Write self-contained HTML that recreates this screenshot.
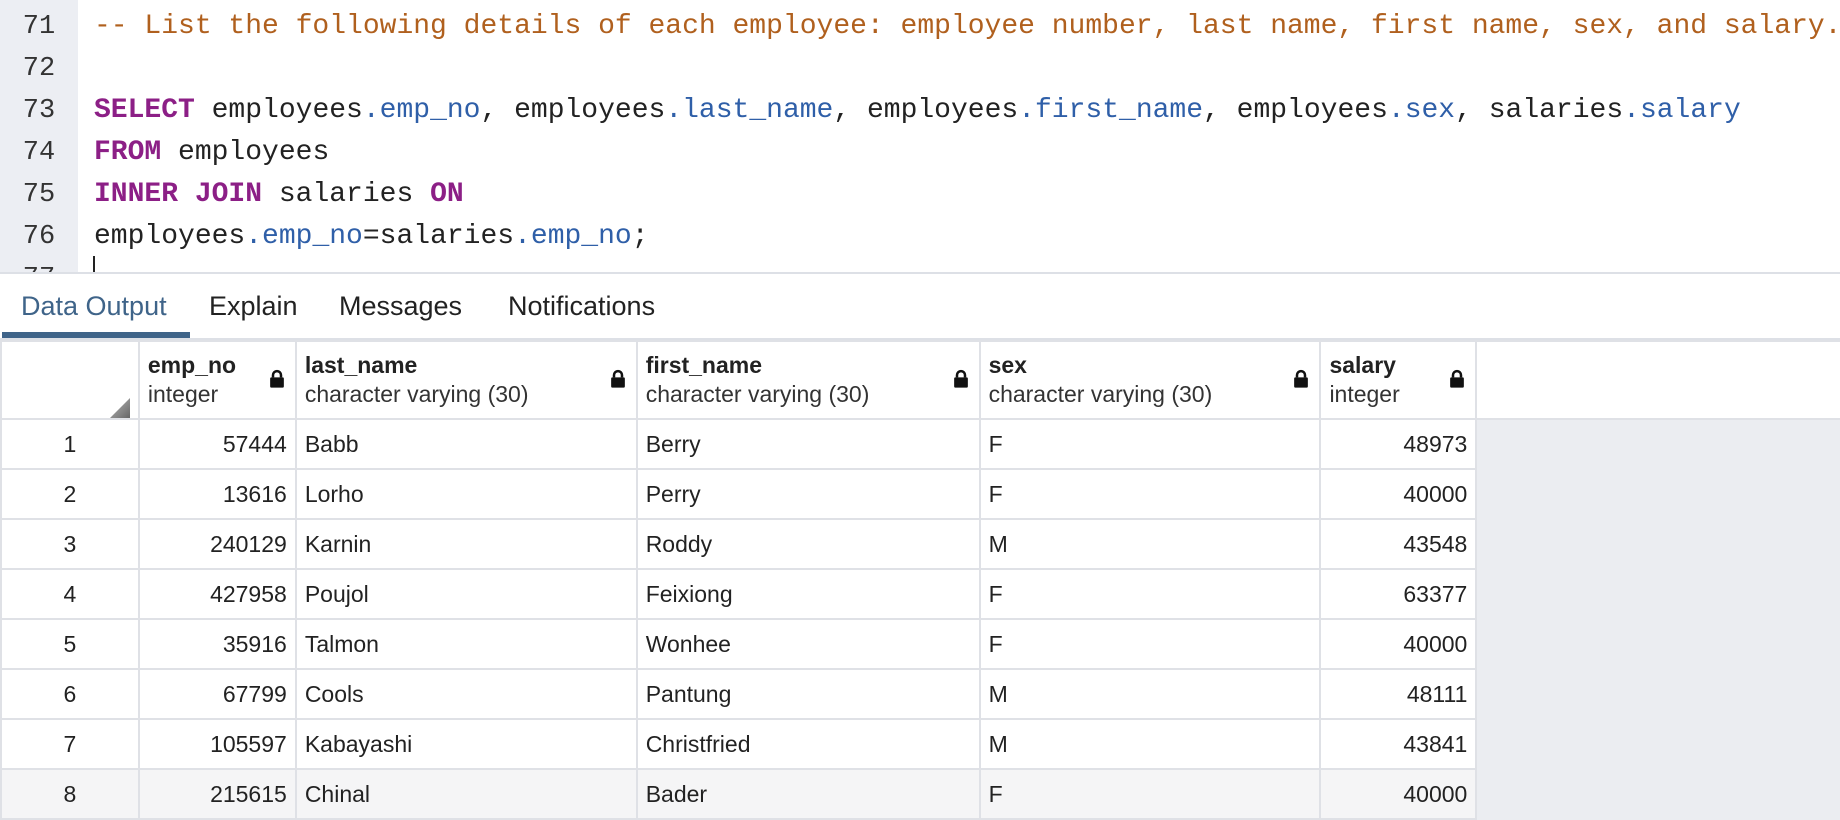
<!DOCTYPE html>
<html><head><meta charset="utf-8"><style>
*{margin:0;padding:0;box-sizing:border-box}
body{width:1840px;height:820px;overflow:hidden;background:#fff;font-family:"Liberation Sans",sans-serif;color:#222;position:relative}
#ed{position:absolute;left:0;top:0;width:1840px;height:274px;overflow:hidden;border-bottom:2px solid #dde0e6}
#gut{position:absolute;left:0;top:0;width:78px;height:274px;background:#eceef3}
.ln{position:absolute;left:0;width:78px;text-align:center;font-family:"Liberation Mono",monospace;font-size:27px;color:#333;line-height:42px}
.cl{position:absolute;left:94px;font-family:"Liberation Mono",monospace;font-size:28px;letter-spacing:0;line-height:42px;white-space:pre;color:#222}
.c{color:#b0601e}.k{color:#8c1f86;font-weight:bold}.p{color:#2f5fa8}
.tab{position:absolute;top:290px;font-size:27px;color:#222;line-height:32px}
#ul{position:absolute;left:2px;top:332px;width:188px;height:6px;background:#3f6489}
#hdr{position:absolute;left:0;top:338px;width:1840px;height:2px;background:#dde0e6}
#right{position:absolute;left:1476px;top:418px;width:364px;height:402px;background:#ebedf1}
table{position:absolute;left:0;top:340px;border-collapse:collapse;font-size:23px}
td,th{border:2px solid #dfe1e6;height:50px;padding:0 8px;white-space:nowrap}
th{height:78px;text-align:left;font-weight:normal;vertical-align:middle;position:relative}
th b{display:block;font-size:23px;line-height:28px}
th span{display:block;font-size:23px;line-height:30px;color:#333}
.lk{position:absolute;right:10px;top:27px;width:16px;height:19px}
.n{text-align:right}.i{text-align:center}
tr.last td{background:#f5f5f6}
</style></head><body>
<div id="ed"><div id="gut"></div>
<div class="ln" style="top:6px">71</div><div class="ln" style="top:48px">72</div><div class="ln" style="top:90px">73</div><div class="ln" style="top:132px">74</div><div class="ln" style="top:174px">75</div><div class="ln" style="top:216px">76</div><div class="ln" style="top:258px">77</div>
<div class="cl c" style="top:6px">-- List the following details of each employee: employee number, last name, first name, sex, and salary.</div>
<div class="cl" style="top:90px"><span class="k">SELECT</span> employees<span class="p">.emp_no</span>, employees<span class="p">.last_name</span>, employees<span class="p">.first_name</span>, employees<span class="p">.sex</span>, salaries<span class="p">.salary</span></div>
<div class="cl" style="top:132px"><span class="k">FROM</span> employees</div>
<div class="cl" style="top:174px"><span class="k">INNER JOIN</span> salaries <span class="k">ON</span></div>
<div class="cl" style="top:216px">employees<span class="p">.emp_no</span>=salaries<span class="p">.emp_no</span>;</div>
<div style="position:absolute;left:93px;top:256px;width:2px;height:20px;background:#222"></div>
</div>
<div class="tab" style="left:21px;color:#3f6489">Data Output</div>
<div class="tab" style="left:209px">Explain</div>
<div class="tab" style="left:339px">Messages</div>
<div class="tab" style="left:508px">Notifications</div>
<div id="hdr"></div><div id="ul"></div>
<div id="right"></div>
<table>
<tr><th style="width:138px"><svg style="position:absolute;left:108px;top:56px" width="20" height="20"><defs><linearGradient id="g" x1="0" y1="0" x2="1" y2="1"><stop offset="0" stop-color="#bbb"/><stop offset="1" stop-color="#666"/></linearGradient></defs><polygon points="20,0 20,20 0,20" fill="url(#g)"/></svg></th>
<th style="width:157px"><b>emp_no</b><span>integer</span><svg class="lk" viewBox="0 0 14 16"><path d="M3.5 7V5a3.5 3.5 0 0 1 7 0v2" fill="none" stroke="#111" stroke-width="2.2"/><rect x="1" y="7" width="12" height="9" rx="1" fill="#111"/></svg></th>
<th style="width:341px"><b>last_name</b><span>character varying (30)</span><svg class="lk" viewBox="0 0 14 16"><path d="M3.5 7V5a3.5 3.5 0 0 1 7 0v2" fill="none" stroke="#111" stroke-width="2.2"/><rect x="1" y="7" width="12" height="9" rx="1" fill="#111"/></svg></th>
<th style="width:343px"><b>first_name</b><span>character varying (30)</span><svg class="lk" viewBox="0 0 14 16"><path d="M3.5 7V5a3.5 3.5 0 0 1 7 0v2" fill="none" stroke="#111" stroke-width="2.2"/><rect x="1" y="7" width="12" height="9" rx="1" fill="#111"/></svg></th>
<th style="width:341px"><b>sex</b><span>character varying (30)</span><svg class="lk" viewBox="0 0 14 16"><path d="M3.5 7V5a3.5 3.5 0 0 1 7 0v2" fill="none" stroke="#111" stroke-width="2.2"/><rect x="1" y="7" width="12" height="9" rx="1" fill="#111"/></svg></th>
<th style="width:156px"><b>salary</b><span>integer</span><svg class="lk" viewBox="0 0 14 16"><path d="M3.5 7V5a3.5 3.5 0 0 1 7 0v2" fill="none" stroke="#111" stroke-width="2.2"/><rect x="1" y="7" width="12" height="9" rx="1" fill="#111"/></svg></th>
<th style="width:364px;border-right:none"></th></tr>
<tr><td class="i">1</td><td class="n">57444</td><td>Babb</td><td>Berry</td><td>F</td><td class="n">48973</td></tr>
<tr><td class="i">2</td><td class="n">13616</td><td>Lorho</td><td>Perry</td><td>F</td><td class="n">40000</td></tr>
<tr><td class="i">3</td><td class="n">240129</td><td>Karnin</td><td>Roddy</td><td>M</td><td class="n">43548</td></tr>
<tr><td class="i">4</td><td class="n">427958</td><td>Poujol</td><td>Feixiong</td><td>F</td><td class="n">63377</td></tr>
<tr><td class="i">5</td><td class="n">35916</td><td>Talmon</td><td>Wonhee</td><td>F</td><td class="n">40000</td></tr>
<tr><td class="i">6</td><td class="n">67799</td><td>Cools</td><td>Pantung</td><td>M</td><td class="n">48111</td></tr>
<tr><td class="i">7</td><td class="n">105597</td><td>Kabayashi</td><td>Christfried</td><td>M</td><td class="n">43841</td></tr>
<tr class="last"><td class="i">8</td><td class="n">215615</td><td>Chinal</td><td>Bader</td><td>F</td><td class="n">40000</td></tr>
</table>
</body></html>
